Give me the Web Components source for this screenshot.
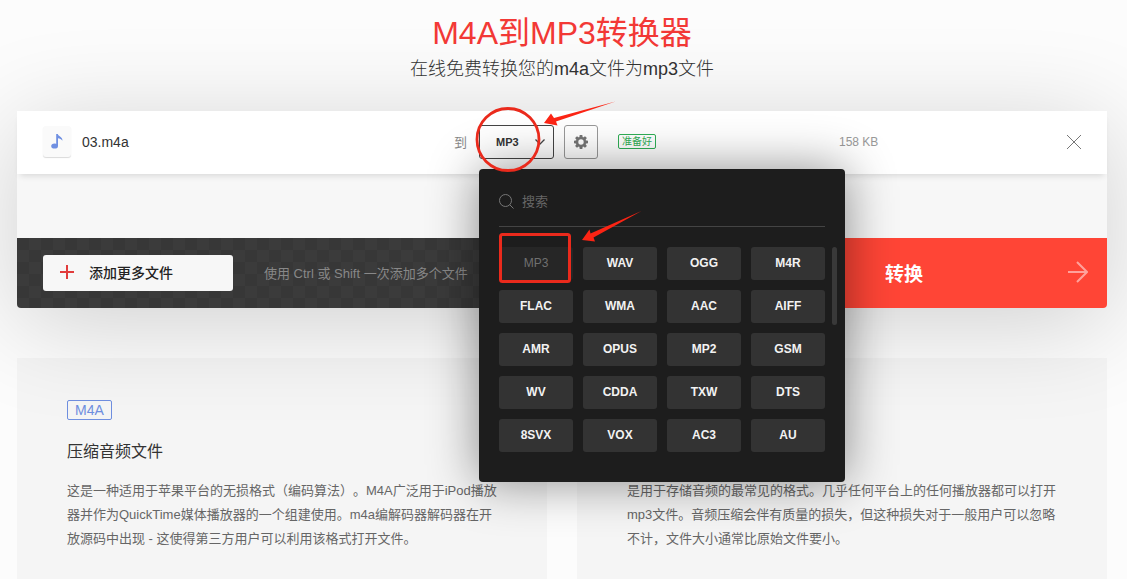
<!DOCTYPE html>
<html lang="zh-CN">
<head>
<meta charset="utf-8">
<meta name="viewport" content="width=device-width, initial-scale=1">
<title>M4A到MP3转换器</title>
<style>
  body {
    margin: 0;
    min-height: 100vh;
    background: #fcfcfc;
    color: #333;
    font-family: 'Liberation Sans', 'Noto Sans CJK SC', sans-serif;
    text-spacing-trim: space-all;
  }
</style>
</head>
<body>

<converter-page>
  <page-heading slot="heading">
    M4A到MP3转换器
    <span slot="subtitle">在线免费转换您的m4a文件为mp3文件</span>
  </page-heading>

  <convert-box slot="converter">
    <file-row name="03.m4a" size="158 KB">
      <format-picker slot="picker" value="MP3"></format-picker>
      <span slot="status">准备好</span>
    </file-row>
    <span slot="add">添加更多文件</span>
    <span slot="hint">使用 Ctrl 或 Shift 一次添加多个文件</span>
    <span slot="convert">转换</span>
  </convert-box>

  <format-info badge="M4A" heading="压缩音频文件">这是一种适用于苹果平台的无损格式（编码算法）。M4A广泛用于iPod播放器并作为QuickTime媒体播放器的一个组建使用。m4a编解码器解码器在开放源码中出现 - 这使得第三方用户可以利用该格式打开文件。</format-info>
  <format-info>是用于存储音频的最常见的格式。几乎任何平台上的任何播放器都可以打开mp3文件。音频压缩会伴有质量的损失，但这种损失对于一般用户可以忽略不计，文件大小通常比原始文件要小。</format-info>
</converter-page>

<script>
// Attach an open shadow root filled from a markup string
function render(host, html) {
  const template = document.createElement('template');
  template.innerHTML = html;
  host.attachShadow({ mode: 'open' }).appendChild(template.content.cloneNode(true));
}

// ----- Page layout -----
class ConverterPage extends HTMLElement {
  constructor() {
    super();
    render(this, `
      <style>
        :host {
          display: flex;
          flex-direction: column;
          min-height: 100vh;
          box-sizing: border-box;
          padding: 0 20px 0 17px;
        }
        .formats {
          flex: 1;
          display: grid;
          grid-template-columns: 1fr 1fr;
          gap: 30px;
          margin-top: 50px;
        }
      </style>
      <slot name="heading"></slot>
      <slot name="converter"></slot>
      <section class="formats"><slot></slot></section>
    `);
  }
}

// ----- Title and subtitle -----
class PageHeading extends HTMLElement {
  constructor() {
    super();
    render(this, `
      <style>
        :host {
          display: block;
          padding: 12px 0 27px;
          text-align: center;
        }
        h1 {
          margin: 0;
          color: #f33936;
          font-size: 32px;
          font-weight: 400;
          line-height: 42px;
        }
        p {
          margin: 0;
          font-size: 18px;
          font-weight: 300;
          line-height: 30px;
        }
      </style>
      <h1><slot></slot></h1>
      <p><slot name="subtitle"></slot></p>
    `);
  }
}

// ----- File list with the action bar below it -----
class ConvertBox extends HTMLElement {
  constructor() {
    super();
    render(this, `
      <style>
        :host {
          display: block;
          position: relative;
          z-index: 1;
          border-radius: 0 0 4px 4px;
          background: #f7f7f7;
          box-shadow: 0 15px 100px rgba(0, 0, 0, 0.18);
        }
        .files {
          padding-bottom: 64px;
        }
        .bar {
          display: grid;
          grid-template-columns: 810fr 280fr;
          height: 70px;
          border-radius: 0 0 4px 4px;
          overflow: hidden;
        }
        .left {
          display: flex;
          align-items: center;
          gap: 31px;
          padding-left: 26px;
          background: repeating-conic-gradient(#3b3b3b 0 25%, #373737 0 50%) 0 0 / 24px 24px;
        }
        button {
          display: flex;
          align-items: center;
          border: 0;
          font-family: inherit;
          cursor: pointer;
        }
        .add {
          gap: 15px;
          width: 190px;
          height: 36px;
          padding: 0 17px 2px;
          border-radius: 3px;
          background: #f7f7f7;
          color: #222;
          font-size: 14px;
          font-weight: 500;
        }
        .hint {
          padding-bottom: 2px;
          color: #888;
          font-size: 13px;
        }
        .convert {
          justify-content: space-between;
          padding: 0 19px 2px 58px;
          background: #ff4536;
          color: #fff;
          font-size: 19px;
          font-weight: 700;
        }
      </style>
      <div class="files"><slot></slot></div>
      <div class="bar">
        <div class="left">
          <button class="add" type="button">
            <svg width="14" height="14" viewBox="0 0 14 14" aria-hidden="true">
              <path d="M7 0v14M0 7h14" stroke="#e13c3c" stroke-width="2"/>
            </svg>
            <slot name="add"></slot>
          </button>
          <span class="hint"><slot name="hint"></slot></span>
        </div>
        <button class="convert" type="button">
          <slot name="convert"></slot>
          <svg width="20" height="22" viewBox="0 0 20 22" fill="none" aria-hidden="true">
            <path d="M0 11h19M9 1l10 10L9 21" stroke="#ffa29b" stroke-width="2"/>
          </svg>
        </button>
      </div>
    `);
  }
}

// ----- One uploaded file -----
class FileRow extends HTMLElement {
  constructor() {
    super();
    render(this, `
      <style>
        :host {
          display: grid;
          grid-template-columns: 411fr 385fr 242fr;
          align-items: center;
          box-sizing: border-box;
          height: 63px;
          padding: 0 26px 2px;
          background: #fff;
          box-shadow: 0 5px 6px -3px rgba(0, 0, 0, 0.12);
        }
        .file, .target, .meta {
          display: flex;
          align-items: center;
        }
        .file {
          gap: 11px;
          font-size: 14px;
        }
        .thumb {
          display: grid;
          place-items: center;
          width: 28px;
          height: 31px;
          border-radius: 3px;
          background: #fafafa;
          box-shadow: 0 1px 1px rgba(0, 0, 0, 0.15);
        }
        .to {
          margin-right: 12px;
          color: #888;
          font-size: 13px;
        }
        .gear {
          display: grid;
          place-items: center;
          width: 34px;
          height: 34px;
          margin: 0 20px 0 10px;
          padding: 0;
          border: 1px solid #999;
          border-radius: 3px;
          background: transparent;
        }
        .status {
          padding: 0 3px;
          border: 1px solid #2fae55;
          border-radius: 2px;
          color: #2fae55;
          font-size: 10px;
          line-height: 13px;
        }
        .meta {
          justify-content: space-between;
          color: #999;
          font-size: 12px;
        }
        .remove {
          display: flex;
          padding: 0;
          border: 0;
          background: none;
        }
      </style>
      <div class="file">
        <span class="thumb">
          <svg width="12" height="15" viewBox="0 0 12 15" aria-hidden="true">
            <ellipse cx="3.600" cy="12" rx="3.400" ry="2.600" fill="#7090e2"/>
            <path d="M5.200 0h1.600c.3 2.300 5 2.600 4.600 6.700C10.500 5.100 8.600 4.300 7 4.200V12H5.200z" fill="#7090e2"/>
          </svg>
        </span>
        <span class="name"></span>
      </div>
      <div class="target">
        <span class="to">到</span>
        <slot name="picker"></slot>
        <button class="gear" type="button" aria-label="设置">
          <svg width="16" height="16" viewBox="-8 -8 16 16" aria-hidden="true">
            <g fill="#757575">
              <path id="tooth" d="M-1.300-7h2.600l.5 3h-3.600z"/>
              <use href="#tooth" transform="rotate(45)"/>
              <use href="#tooth" transform="rotate(90)"/>
              <use href="#tooth" transform="rotate(135)"/>
              <use href="#tooth" transform="rotate(180)"/>
              <use href="#tooth" transform="rotate(225)"/>
              <use href="#tooth" transform="rotate(270)"/>
              <use href="#tooth" transform="rotate(315)"/>
            </g>
            <circle r="3.900" fill="none" stroke="#757575" stroke-width="2.400"/>
          </svg>
        </button>
        <span class="status"><slot name="status"></slot></span>
      </div>
      <div class="meta">
        <span class="size"></span>
        <button class="remove" type="button" aria-label="移除">
          <svg width="14" height="14" viewBox="0 0 14 14" aria-hidden="true">
            <path d="M0 0l14 14M14 0L0 14" stroke="#777"/>
          </svg>
        </button>
      </div>
    `);
  }

  connectedCallback() {
    this.shadowRoot.querySelector('.name').textContent = this.getAttribute('name');
    this.shadowRoot.querySelector('.size').textContent = this.getAttribute('size');
  }
}

// ----- Target format select and its open menu -----
const FORMATS = [
  'MP3', 'WAV', 'OGG', 'M4R',
  'FLAC', 'WMA', 'AAC', 'AIFF',
  'AMR', 'OPUS', 'MP2', 'GSM',
  'WV', 'CDDA', 'TXW', 'DTS',
  '8SVX', 'VOX', 'AC3', 'AU'
];

class FormatPicker extends HTMLElement {
  constructor() {
    super();
    render(this, `
      <style>
        :host {
          display: block;
          position: relative;
        }
        .field {
          display: grid;
          align-items: center;
        }
        .field > * {
          grid-area: 1 / 1;
        }
        select {
          appearance: none;
          width: 75px;
          height: 34px;
          margin: 0;
          padding: 0 16px;
          border: 1px solid #444;
          border-radius: 3px;
          background: transparent;
          color: #333;
          font: bold 11px 'Liberation Sans', sans-serif;
        }
        .chevron {
          justify-self: end;
          margin-right: 9px;
          pointer-events: none;
        }
        .menu {
          position: absolute;
          z-index: 1;
          top: 44px;
          left: 0;
          box-sizing: border-box;
          width: 366px;
          padding: 14px 8px 30px 20px;
          border-radius: 4px;
          background: #1d1d1d;
          box-shadow: 0 0 50px rgba(0, 0, 0, 0.45);
        }
        .search {
          display: flex;
          align-items: center;
          gap: 8px;
          height: 43px;
          margin: 0 12px 20px 0;
          border-bottom: 1px solid #444;
        }
        .search svg {
          margin-bottom: 6px;
        }
        input {
          flex: 1;
          min-width: 0;
          margin: 0 0 6px;
          padding: 0;
          border: 0;
          background: none;
          color: #fff;
          font-family: inherit;
          font-size: 13px;
        }
        input::placeholder {
          color: #666;
        }
        .list {
          display: flex;
          gap: 7px;
        }
        .formats {
          flex: 1;
          display: grid;
          grid-template-columns: repeat(4, 1fr);
          gap: 10px;
        }
        .formats button {
          height: 33px;
          padding: 0;
          border: 0;
          border-radius: 3px;
          background: #333;
          color: #f2f2f2;
          font: bold 12px 'Liberation Sans', sans-serif;
        }
        .formats button:disabled {
          background: #262626;
          color: #707070;
          font-weight: normal;
        }
        .thumb {
          width: 5px;
          height: 78px;
          border-radius: 3px;
          background: #393939;
        }
        .marks {
          position: absolute;
          z-index: 2;
          top: -30px;
          left: -10px;
          pointer-events: none;
        }
      </style>
      <div class="field">
        <select aria-label="格式"></select>
        <svg class="chevron" width="10" height="6" viewBox="0 0 10 6" aria-hidden="true">
          <path d="M.5.500L5 5l4.500-4.500" fill="none" stroke="#444" stroke-width="1.300"/>
        </svg>
      </div>
      <div class="menu">
        <label class="search">
          <svg width="15" height="15" viewBox="0 0 15 15" fill="none" stroke="#777" aria-hidden="true">
            <circle cx="6.500" cy="6.500" r="6"/>
            <path d="M10.700 10.700l3.800 3.800"/>
          </svg>
          <input type="text" placeholder="搜索" aria-label="搜索">
        </label>
        <div class="list">
          <div class="formats"></div>
          <div class="thumb"></div>
        </div>
      </div>
      <svg class="marks" width="180" height="195" viewBox="0 0 180 195" aria-hidden="true">
        <g fill="none" stroke="#ea2a1c">
          <circle cx="39" cy="44.500" r="31" stroke-width="2.800"/>
          <rect x="31.500" y="139.500" width="69" height="47" rx="2" stroke-width="3"/>
        </g>
        <g fill="#fb2414">
          <path d="M75 28l7-9.500 3 4.500 61.500-16.500L87 26.500l1.500 4z"/>
          <path d="M113 145l7.500-10.500 1 4L172.500 116 124.500 142.500l1.500 4z"/>
        </g>
      </svg>
    `);
  }

  connectedCallback() {
    const select = this.shadowRoot.querySelector('select');
    const grid = this.shadowRoot.querySelector('.formats');
    const value = this.getAttribute('value');

    select.add(new Option(value, value, true, true));

    FORMATS.forEach((format) => {
      const button = document.createElement('button');
      button.type = 'button';
      button.textContent = format;
      button.disabled = format === value;
      grid.appendChild(button);
    });
  }
}

// ----- Description of a format -----
class FormatInfo extends HTMLElement {
  constructor() {
    super();
    render(this, `
      <style>
        :host {
          display: flex;
          flex-direction: column;
          align-items: flex-start;
          justify-content: flex-end;
          padding: 42px 50px 28px;
          background: rgba(0, 0, 0, 0.027);
        }
        .badge {
          padding: 0 7px;
          border: 1px solid #6f8fe0;
          border-radius: 2px;
          color: #6f8fe0;
          font-size: 14px;
          line-height: 18px;
        }
        h2 {
          margin: 20px 0 15px;
          font-size: 16px;
          font-weight: 400;
          line-height: 24px;
        }
        p {
          margin: 0;
          color: #666;
          font-size: 13px;
          line-height: 24px;
        }
      </style>
      <p><slot></slot></p>
    `);
  }

  connectedCallback() {
    if (!this.hasAttribute('heading')) return;

    const badge = document.createElement('span');
    badge.className = 'badge';
    badge.textContent = this.getAttribute('badge');

    const heading = document.createElement('h2');
    heading.textContent = this.getAttribute('heading');

    this.shadowRoot.querySelector('p').before(badge, heading);
  }
}

customElements.define('converter-page', ConverterPage);
customElements.define('page-heading', PageHeading);
customElements.define('convert-box', ConvertBox);
customElements.define('file-row', FileRow);
customElements.define('format-picker', FormatPicker);
customElements.define('format-info', FormatInfo);
</script>
</body>
</html>
